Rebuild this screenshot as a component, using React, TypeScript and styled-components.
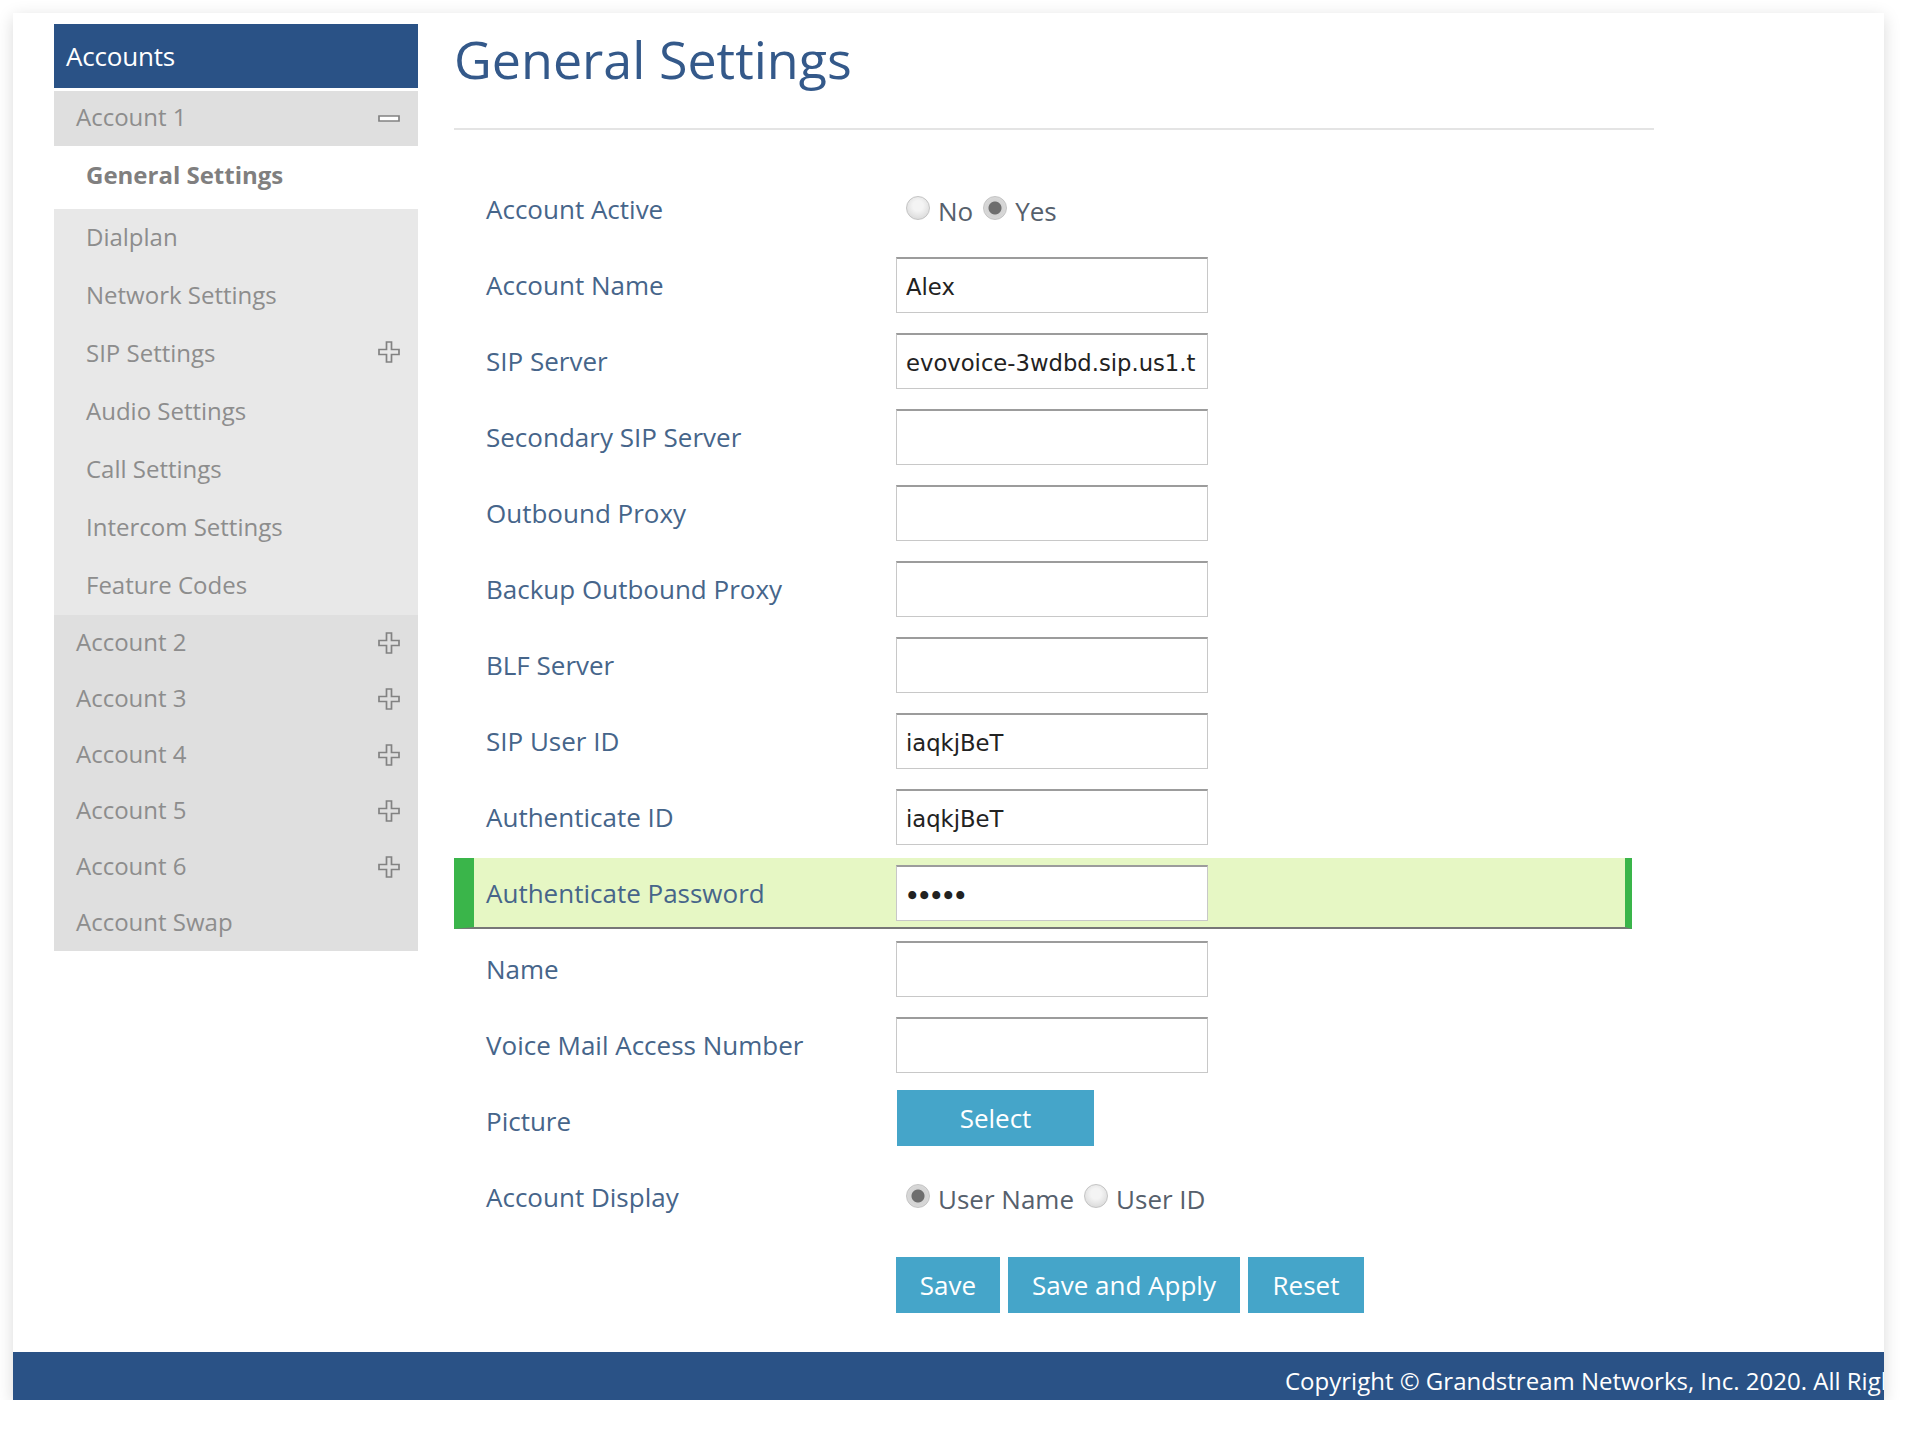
import React from "react";
import styled, { createGlobalStyle } from "styled-components";

const Global = createGlobalStyle`
  html, body { margin: 0; padding: 0; background: #fff; }
  * { box-sizing: border-box; }
  body { font-family: "Open Sans", "Liberation Sans", sans-serif; }
`;

const Frame = styled.div`
  margin: 13px 0 0 13px;
  width: 1871px;
  height: 1387px;
  background: #fff;
  box-shadow: 0 4px 16px rgba(0, 0, 0, 0.15);
  display: flex;
  flex-direction: column;
`;
const Content = styled.div`
  flex: 1;
  display: flex;
  padding: 11px 0 0 41px;
  gap: 36px;
`;
const Sidebar = styled.nav`
  width: 364px;
  flex: none;
  display: flex;
  flex-direction: column;
`;
const SideHeader = styled.div`
  height: 64px;
  margin-bottom: 3px;
  background: #2a5286;
  color: #fff;
  font-size: 26px;
  letter-spacing: -0.2px;
  line-height: 64px;
  padding-left: 12px;
`;
const AccountRow = styled.div<{ $h?: number }>`
  height: ${(p) => p.$h ?? 56}px;
  background: #dfdfdf;
  color: #8d8d8d;
  font-size: 24px;
  padding: 0 18px 0 22px;
  display: flex;
  align-items: center;
  justify-content: space-between;
`;
const AccountName = styled.span`
  margin-bottom: 4px;
`;
const SubList = styled.div`
  display: flex;
  flex-direction: column;
  background: #e8e8e8;
`;
const SubItem = styled.div`
  height: 58px;
  display: flex;
  align-items: center;
  justify-content: space-between;
  padding: 0 18px 4px 32px;
  color: #8d8d8d;
  font-size: 24px;
`;
const ActiveItem = styled.div`
  height: 63px;
  display: flex;
  align-items: center;
  padding: 0 0 6px 32px;
  background: #fff;
  color: #807f7f;
  font-size: 24px;
  font-weight: 700;
`;
const Main = styled.main`
  width: 1200px;
  flex: none;
  display: flex;
  flex-direction: column;
`;
const Title = styled.h1`
  margin: 0;
  height: 106px;
  border-bottom: 2px solid #e4e4e4;
  color: #34598a;
  font-size: 52px;
  font-weight: 400;
  line-height: 52px;
  padding-top: 9px;
`;
const Form = styled.div`
  width: 1178px;
  padding-top: 41px;
  display: flex;
  flex-direction: column;
`;
const Row = styled.div<{ $hl?: boolean }>`
  display: flex;
  align-items: center;
  height: ${(p) => (p.$hl ? 71 : 76)}px;
  margin: ${(p) => (p.$hl ? "3px 0 2px" : "0")};
  padding-left: ${(p) => (p.$hl ? 12 : 32)}px;
  background: ${(p) => (p.$hl ? "#e6f7c4" : "transparent")};
  border-left: ${(p) => (p.$hl ? "20px solid #3ab54a" : "0")};
  border-right: ${(p) => (p.$hl ? "7px solid #3ab54a" : "0")};
  border-bottom: ${(p) => (p.$hl ? "2px solid #777" : "0")};
`;
const Label = styled.label`
  width: 410px;
  flex: none;
  color: #46658a;
  font-size: 26px;
`;
const TextInput = styled.input`
  width: 312px;
  height: 56px;
  background: #fff;
  border: 1px solid #c8c8c8;
  border-top: 2px solid #9c9c9c;
  border-radius: 0;
  outline: none;
  padding: 2px 8px 0 9px;
  color: #222;
  font-family: "DejaVu Sans", sans-serif;
  font-size: 22.7px;
  &[type="password"] {
    font-weight: 700;
    letter-spacing: -2.5px;
    padding: 6px 8px 0 8px;
  }
`;
const RadioGroup = styled.div`
  display: flex;
  align-items: center;
  padding-left: 10px;
`;
const Radio = styled.input`
  appearance: none;
  width: 24px;
  height: 24px;
  margin: -3px 8px 0 0;
  border-radius: 50%;
  border: 1px solid #c4c4c4;
  background: radial-gradient(circle at 50% 40%, #f4f4f4 30%, #d0d0d0 100%);
  flex: none;
  &:checked {
    background: radial-gradient(circle, #6e6e6e 0 6px, #d4d4d4 7px, #dcdcdc 100%);
  }
`;
const RadioText = styled.span`
  color: #56606c;
  font-size: 26px;
  margin: 3px 10px 0 0;
`;
const Button = styled.button<{ $w: number }>`
  width: ${(p) => p.$w}px;
  height: 56px;
  border: 0;
  background: #45a5c9;
  color: #fff;
  font-family: "Open Sans", sans-serif;
  font-size: 26px;
  padding: 0;
  flex: none;
`;
const SelectButton = styled(Button)`
  margin: 0 0 7px 1px;
`;
const Actions = styled.div`
  display: flex;
  gap: 8px;
  margin: 22px 0 0 442px;
`;
const Footer = styled.footer`
  height: 48px;
  background: #2a5286;
  color: #fff;
  font-size: 24px;
  padding: 10px 0 0 1272px;
  line-height: 38px;
  white-space: nowrap;
  overflow: hidden;
`;

const Plus = () => (
  <svg width="22" height="22" viewBox="0 0 22 22" fill="none" stroke="#828282" strokeWidth="1.7">
    <path d="M8.5 1h5v7.5H21v5h-7.5V21h-5v-7.5H1v-5h7.5z" />
  </svg>
);
const Minus = () => (
  <svg width="22" height="7" viewBox="0 0 22 7" fill="#fff" stroke="#828282" strokeWidth="1.7">
    <path d="M1 1h20v5H1z" />
  </svg>
);

const subs: [string, boolean][] = [
  ["Dialplan", false],
  ["Network Settings", false],
  ["SIP Settings", true],
  ["Audio Settings", false],
  ["Call Settings", false],
  ["Intercom Settings", false],
  ["Feature Codes", false],
];

const fields: [string, string, string?][] = [
  ["Account Name", "Alex"],
  ["SIP Server", "evovoice-3wdbd.sip.us1.t"],
  ["Secondary SIP Server", ""],
  ["Outbound Proxy", ""],
  ["Backup Outbound Proxy", ""],
  ["BLF Server", ""],
  ["SIP User ID", "iaqkjBeT"],
  ["Authenticate ID", "iaqkjBeT"],
  ["Authenticate Password", "12345", "password"],
  ["Name", ""],
  ["Voice Mail Access Number", ""],
];

export default function App() {
  return (
    <>
      <Global />
      <Frame>
        <Content>
          <Sidebar>
            <SideHeader>Accounts</SideHeader>
            <AccountRow $h={55}>
              <AccountName>Account 1</AccountName>
              <Minus />
            </AccountRow>
            <ActiveItem>General Settings</ActiveItem>
            <SubList>
              {subs.map(([name, more]) => (
                <SubItem key={name}>
                  {name}
                  {more && <Plus />}
                </SubItem>
              ))}
            </SubList>
            {[2, 3, 4, 5, 6].map((n) => (
              <AccountRow key={n}>
                <AccountName>Account {n}</AccountName>
                <Plus />
              </AccountRow>
            ))}
            <AccountRow>
              <AccountName>Account Swap</AccountName>
            </AccountRow>
          </Sidebar>
          <Main>
            <Title>General Settings</Title>
            <Form>
              <Row>
                <Label>Account Active</Label>
                <RadioGroup>
                  <Radio type="radio" name="active" />
                  <RadioText>No</RadioText>
                  <Radio type="radio" name="active" defaultChecked />
                  <RadioText>Yes</RadioText>
                </RadioGroup>
              </Row>
              {fields.map(([label, value, type]) => (
                <Row key={label} $hl={type === "password"}>
                  <Label>{label}</Label>
                  <TextInput type={type ?? "text"} defaultValue={value} />
                </Row>
              ))}
              <Row>
                <Label>Picture</Label>
                <SelectButton $w={197}>Select</SelectButton>
              </Row>
              <Row>
                <Label>Account Display</Label>
                <RadioGroup>
                  <Radio type="radio" name="display" defaultChecked />
                  <RadioText>User Name</RadioText>
                  <Radio type="radio" name="display" />
                  <RadioText>User ID</RadioText>
                </RadioGroup>
              </Row>
              <Actions>
                <Button $w={104}>Save</Button>
                <Button $w={232}>Save and Apply</Button>
                <Button $w={116}>Reset</Button>
              </Actions>
            </Form>
          </Main>
        </Content>
        <Footer>Copyright © Grandstream Networks, Inc. 2020. All Rights Reserved.</Footer>
      </Frame>
    </>
  );
}
